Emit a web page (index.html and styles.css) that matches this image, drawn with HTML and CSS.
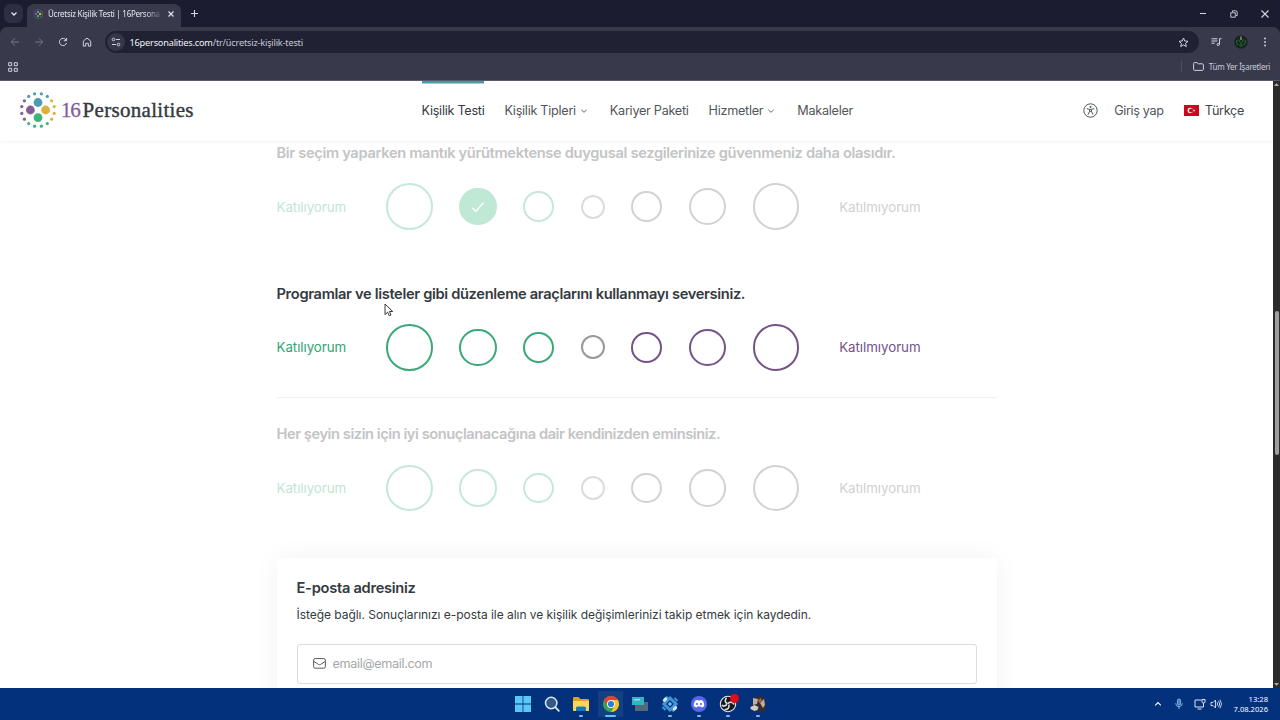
FILE: index.html
```html
<!DOCTYPE html>
<html lang="tr">
<head>
  <meta charset="UTF-8">
  <meta name="viewport" content="width=device-width, initial-scale=1.0">
  <title>Ücretsiz Kişilik Testi | 16Personalities</title>
  <link rel="stylesheet" href="styles.css">
</head>
<body>
  <svg class="defs" width="0" height="0">
    <symbol id="logo" viewBox="0 0 36 36">
      <g fill="#4a9cb0"><circle cx="18" cy="10.5" r="4.4"/><circle cx="14.6" cy="1.8" r="1.6"/><circle cx="21.4" cy="1.8" r="1.6"/><circle cx="8.7" cy="4.4" r="1.6"/><circle cx="27.3" cy="4.4" r="1.6"/></g>
      <g fill="#e0b03c"><circle cx="25.6" cy="18" r="4.4"/><circle cx="31.6" cy="8.8" r="1.6"/><circle cx="34.2" cy="14.6" r="1.6"/><circle cx="34.2" cy="21.4" r="1.6"/><circle cx="31.6" cy="27.2" r="1.6"/></g>
      <g fill="#3db37b"><circle cx="18" cy="25.6" r="4.4"/><circle cx="14.6" cy="34.2" r="1.6"/><circle cx="21.4" cy="34.2" r="1.6"/><circle cx="8.7" cy="31.6" r="1.6"/><circle cx="27.3" cy="31.6" r="1.6"/></g>
      <g fill="#835d9b"><circle cx="10.4" cy="18" r="4.4"/><circle cx="4.4" cy="8.8" r="1.6"/><circle cx="1.8" cy="14.6" r="1.6"/><circle cx="1.8" cy="21.4" r="1.6"/><circle cx="4.4" cy="27.2" r="1.6"/></g>
    </symbol>
    <symbol id="down" viewBox="0 0 8 8"><path d="M1.3 2.8 4 5.3l2.7-2.5" fill="none" stroke="currentColor" stroke-width=".9"/></symbol>
  </svg>

  <div class="tabbar">
    <span class="tab-search"><svg width="8" height="8" viewBox="0 0 8 8"><path d="M1.5 2.5 4 5l2.5-2.5" fill="none" stroke="#e4e5ed" stroke-width="1.3"/></svg></span>
    <div class="tab">
      <svg class="favicon" width="10" height="10"><use href="#logo"/></svg>
      <span class="tab-title">Ücretsiz Kişilik Testi | 16Persona</span>
      <svg width="8" height="8" viewBox="0 0 8 8"><path d="m1.5 1.5 5 5m0-5-5 5" stroke="#e4e5ed" stroke-width="1.1"/></svg>
    </div>
    <svg class="new-tab" width="9" height="9" viewBox="0 0 9 9"><path d="M4.5 1v7M1 4.5h7" stroke="#d5d6df" stroke-width="1.1"/></svg>
    <div class="window-buttons">
      <svg width="10" height="10" viewBox="0 0 10 10"><path d="M2 4.5h6" stroke="#d5d6df"/></svg>
      <svg width="10" height="10" viewBox="0 0 10 10"><path d="M1.8 3.7h4.5v4.5H1.8zM3.5 3V1.8h3.3q1.4 0 1.4 1.4v3.3H7" fill="none" stroke="#d5d6df" stroke-width=".9"/></svg>
      <svg width="10" height="10" viewBox="0 0 10 10"><path d="m1.5 1.5 7 7m0-7-7 7" stroke="#d5d6df" stroke-width="1.1"/></svg>
    </div>
  </div>

  <div class="chrome">
    <div class="toolbar">
      <div class="nav-buttons">
        <svg class="disabled" width="10" height="10" viewBox="0 0 10 10"><path d="M9 5H1.5M5 1.3 1.3 5 5 8.7"/></svg>
        <svg class="disabled" width="10" height="10" viewBox="0 0 10 10"><path d="M1 5h7.5M5 1.3 8.7 5 5 8.7"/></svg>
        <svg width="10" height="10" viewBox="0 0 10 10"><path d="M8.2 3.2A3.6 3.6 0 1 0 8.5 6M8.6.9v2.8H5.8"/></svg>
        <svg width="10" height="10" viewBox="0 0 10 10"><path d="M1.3 4.1 5 1.1l3.7 3v5H6.3V6.3H3.7v2.8H1.3z"/></svg>
      </div>
      <div class="address">
        <span class="site-info"><svg width="10" height="10" viewBox="0 0 10 10"><path d="M5 2.5h4M1 7.5h4"/><circle cx="2.5" cy="2.5" r="1.3"/><circle cx="7.5" cy="7.5" r="1.3"/></svg></span>
        <span class="url"><b>16personalities.com</b>/tr/ücretsiz-kişilik-testi</span>
        <svg width="11" height="11" viewBox="0 0 11 11"><path d="m5.5 1 1.3 3 3.2.3-2.4 2.1.7 3.2-2.8-1.7-2.8 1.7.7-3.2L1 4.3 4.2 4z"/></svg>
      </div>
      <div class="tools">
        <svg width="11" height="10" viewBox="0 0 11 10"><path d="M.5 1.8h6M.5 4h6M.5 6.2h3.2M8.5 7.5V1.7h2"/><circle cx="7.2" cy="7.5" r="1.1"/></svg>
        <svg width="14" height="14" viewBox="0 0 14 14"><circle cx="7" cy="7" r="6.7" fill="#16251b" stroke="none"/><path d="M2.8 5q-.8 3 1.4 5M11.2 5q.8 3-1.4 5M4.5 4.5 6 7M9.5 4.5 8 7M5 9.5l2 2 2-2M7 7v3" stroke="#29703b"/><path d="M7 1.5V5" stroke="#b4c8bb"/></svg>
        <svg width="4" height="10" viewBox="0 0 4 10"><g fill="#d5d6df" stroke="none"><circle cx="2" cy="1.5" r=".9"/><circle cx="2" cy="5" r=".9"/><circle cx="2" cy="8.5" r=".9"/></g></svg>
      </div>
    </div>

    <div class="bookmarks">
      <svg width="10" height="10" viewBox="0 0 10 10"><path d="M.7.7h3v3h-3zM6.3.7h3v3h-3zM.7 6.3h3v3h-3zM6.3 6.3h3v3h-3z"/></svg>
      <div class="all-bookmarks">
        <svg width="11" height="9" viewBox="0 0 11 9"><path d="M.6 7.4V1.6q0-1 1-1h2.3l1.3 1.2h4.2q1 0 1 1v4.6q0 1-1 1H1.6q-1 0-1-1z"/></svg>
        <span>Tüm Yer İşaretleri</span>
      </div>
    </div>
  </div>

  <div class="viewport">
    <div class="page">
      <header class="site-header">
        <a class="brand">
          <svg width="36" height="36"><use href="#logo"/></svg>
          <span class="brand-number">16</span><span class="brand-name">Personalities</span>
        </a>
        <nav class="menu">
          <a class="active">Kişilik Testi</a>
          <a>Kişilik Tipleri <svg width="8" height="8"><use href="#down"/></svg></a>
          <a>Kariyer Paketi</a>
          <a>Hizmetler <svg width="8" height="8"><use href="#down"/></svg></a>
          <a>Makaleler</a>
        </nav>
        <div class="account">
          <svg width="15" height="15" viewBox="0 0 15 15"><circle cx="7.5" cy="7.5" r="6.7" fill="none" stroke="#51565b"/><circle cx="7.5" cy="3.9" r="1" fill="#51565b"/><path d="m3.8 5.6 2.7.8v2l-1.3 3.2M11.2 5.6l-2.7.8v2l1.3 3.2M6.5 6.4h2M6.5 8.4h2" fill="none" stroke="#51565b"/></svg>
          <a class="login">Giriş yap</a>
          <svg width="15" height="11" viewBox="0 0 15 11"><path d="M0 0h15v11H0z" fill="#d00620"/><circle cx="6.3" cy="5.5" r="2.7" fill="#fff"/><circle cx="7.1" cy="5.5" r="2.1" fill="#d00620"/><path d="m8.6 5.5 1-.3.1-1 .6.8 1-.3-.6.8.6.8-1-.3-.6.8-.1-1z" fill="#fff"/></svg>
          <a class="language">Türkçe</a>
        </div>
      </header>

      <main class="test">
        <section class="question faded">
          <h2>Bir seçim yaparken mantık yürütmektense duygusal sezgilerinize güvenmeniz daha olasıdır.</h2>
          <div class="scale">
            <span class="agree">Katılıyorum</span>
            <div class="options">
              <i class="xl green"></i>
              <i class="lg green checked"><svg width="16" height="16" viewBox="0 0 16 16"><path d="m2.3 8.8 3.4 3.7 7.8-9" fill="none" stroke="#fff" stroke-width="1.3"/></svg></i>
              <i class="md green"></i><i class="sm"></i><i class="md purple"></i><i class="lg purple"></i><i class="xl purple"></i>
            </div>
            <span class="disagree">Katılmıyorum</span>
          </div>
        </section>

        <section class="question current">
          <h2>Programlar ve listeler gibi düzenleme araçlarını kullanmayı seversiniz.</h2>
          <div class="scale">
            <span class="agree">Katılıyorum</span>
            <div class="options">
              <i class="xl green"></i><i class="lg green"></i><i class="md green"></i><i class="sm"></i><i class="md purple"></i><i class="lg purple"></i><i class="xl purple"></i>
            </div>
            <span class="disagree">Katılmıyorum</span>
          </div>
        </section>

        <section class="question faded">
          <h2 class="tight">Her şeyin sizin için iyi sonuçlanacağına dair kendinizden eminsiniz.</h2>
          <div class="scale">
            <span class="agree">Katılıyorum</span>
            <div class="options">
              <i class="xl green"></i><i class="lg green"></i><i class="md green"></i><i class="sm"></i><i class="md purple"></i><i class="lg purple"></i><i class="xl purple"></i>
            </div>
            <span class="disagree">Katılmıyorum</span>
          </div>
        </section>

        <section class="email-card">
          <h3>E-posta adresiniz</h3>
          <p>İsteğe bağlı. Sonuçlarınızı e-posta ile alın ve kişilik değişimlerinizi takip etmek için kaydedin.</p>
          <div class="email-field">
            <svg width="13" height="11" viewBox="0 0 13 11"><rect x=".6" y=".6" width="11.8" height="9.6" rx="1.6" fill="none" stroke="#555a5f"/><path d="m.8 3.4 4.6 3q1.1.7 2.2 0l4.6-3" fill="none" stroke="#555a5f"/></svg>
            <span>email@email.com</span>
          </div>
        </section>
      </main>
    </div>
    <div class="scrollbar">
      <svg width="7" height="7" viewBox="0 0 7 7"><path d="m1 5 2.5-3L6 5z" fill="#aaa"/></svg>
      <div class="thumb"></div>
      <svg width="7" height="7" viewBox="0 0 7 7"><path d="m1 2 2.5 3L6 2z" fill="#aaa"/></svg>
    </div>
  </div>

  <footer class="taskbar">
    <div class="apps">
      <span class="app"><svg width="18" height="18" viewBox="0 0 18 18"><path d="M1 1h7.6v7.6H1zM9.4 1H17v7.6H9.4zM1 9.4h7.6V17H1zM9.4 9.4H17V17H9.4z" fill="#58c8f5"/></svg></span>
      <span class="app"><svg width="18" height="18" viewBox="0 0 18 18"><circle cx="8.2" cy="8" r="5.7" fill="#315a86" stroke="#dce6ef" stroke-width="1.5"/><path d="m12.3 12.2 3.5 3.7" stroke="#dce6ef" stroke-width="1.8" stroke-linecap="round"/></svg></span>
      <span class="app open"><svg width="18" height="18" viewBox="0 0 18 18"><path d="M1 3q0-1 1-1h4.5l2 2H16q1 0 1 1v10q0 1-1 1H2q-1 0-1-1z" fill="#d9a321"/><path d="M1 6h16v9q0 1-1 1H2q-1 0-1-1z" fill="#fbd65b"/><path d="M4 16v-3q0-1.5 1.5-1.5h7q1.5 0 1.5 1.5v3z" fill="#1878b8"/></svg></span>
      <span class="app selected"><svg width="18" height="18" viewBox="0 0 18 18"><circle cx="9" cy="9" r="8" fill="#32a852"/><path d="M2.1 5A8 8 0 0 1 15.9 5H9L5.6 11z" fill="#e34235"/><path d="M15.9 5A8 8 0 0 1 9 17l3.5-6L13 7.5 9 5z" fill="#fbc11e"/><circle cx="9" cy="9" r="4" fill="#fff"/><circle cx="9" cy="9" r="3.1" fill="#3179dc"/></svg></span>
      <span class="app"><svg width="18" height="18" viewBox="0 0 18 18"><path d="M4 7h13v9H4z" fill="#526b7b"/><path d="M1 2h12v8H1z" fill="#36b1c6"/><path d="M3 4h6v1.5H3z" fill="#8de4e8"/></svg></span>
      <span class="app open"><svg width="18" height="18" viewBox="0 0 18 18"><path d="m9 3 6 6-6 6-6-6z" fill="none" stroke="#3f97d6" stroke-width="3"/><path d="m9 6.8 2.2 2.2L9 11.2 6.8 9z" fill="#6bc0ee"/><path d="m5 1.5 3 3M10 13.5l3 3M1.5 12l3 3M13.5 3l3 3" stroke="#3f97d6" stroke-width="2"/><ellipse cx="4" cy="4.6" rx="2.6" ry="1.7" transform="rotate(-45 4 4.6)" fill="#d7e6ed"/><ellipse cx="14" cy="13.4" rx="2.6" ry="1.7" transform="rotate(-45 14 13.4)" fill="#d7e6ed"/></svg></span>
      <span class="app open"><svg width="18" height="18" viewBox="0 0 18 18"><circle cx="9" cy="9" r="8" fill="#5865e8"/><path d="M5 5.8q1.4-.8 2.8-.9l.4.7h1.6l.4-.7q1.4.1 2.8.9 1.4 2.8 1.2 5.5-1.3 1-2.7 1.2l-.7-1H7.2l-.7 1q-1.4-.2-2.7-1.2Q3.6 8.6 5 5.8z" fill="#fff"/><circle cx="7" cy="9" r="1.1" fill="#5865e8"/><circle cx="11" cy="9" r="1.1" fill="#5865e8"/></svg></span>
      <span class="app open recording"><svg width="18" height="18" viewBox="0 0 18 18"><circle cx="9" cy="9" r="7.7" fill="#18191d" stroke="#e5e6eb" stroke-width="1.1"/><path d="M7.5 2.8q-2.8 3.5.8 6M15 9.5q-2-4.2-6.3-1M5.5 14.5q5 .5 4.5-4.8M3 10q2 2.5 5-.7" fill="none" stroke="#dfe0e4" stroke-width="1.6"/></svg></span>
      <span class="app open"><svg width="18" height="18" viewBox="0 0 18 18"><path d="M4 2.5 12 1l4 3 1 8-2 4-6 1-8-3 3-6z" fill="#342e2d"/><path d="m4 3 5 1-1 5-4 1zM11 8l4-4 1 6-2 3z" fill="#b9afa5"/><path d="m1.5 12 4-2 4 2-1 3-3 1-4-2z" fill="#d0cbc4"/><path d="m9 5 3-2 1 3-3 2z" fill="#a7643e"/></svg></span>
    </div>
    <div class="tray">
      <svg width="8" height="8" viewBox="0 0 8 8"><path d="M1.2 5.3 4 2.6l2.8 2.7" fill="none" stroke="#fff" stroke-width="1.1"/></svg>
      <svg width="10" height="12" viewBox="0 0 10 12"><rect x="3.4" y="1" width="3.2" height="6" rx="1.6" fill="#4c80bb" stroke="#8bc3f0" stroke-width=".8"/><path d="M1.7 5.2q0 3.5 3.3 3.5t3.3-3.5M5 8.7V11" fill="none" stroke="#8bc3f0" stroke-width=".9"/></svg>
      <svg width="12" height="12" viewBox="0 0 12 12"><path d="M7.5 2H1v7h8.5V6.8M3.5 11h4M9.5 5v2M8 1.5h3V4q0 1-1.5 1T8 4z" fill="none" stroke="#dce5f2"/></svg>
      <svg width="12" height="12" viewBox="0 0 12 12"><path d="M1 4.5h2L5.5 2v8L3 7.5H1zM7 4.2q1.3 1.8 0 3.6M8.5 2.8q2.4 3.2 0 6.4M10 1.7q3 4.3 0 8.6" fill="none" stroke="#dce5f2" stroke-width=".9"/></svg>
      <div class="clock"><span>13:28</span><span>7.08.2026</span></div>
    </div>
  </footer>

  <svg class="cursor" width="10" height="15" viewBox="0 0 10 15"><path d="M1 1v10.6l2.6-2.4 1.7 3.6 1.7-.8-1.6-3.5h3.3z" fill="#fff" stroke="#222" stroke-width=".9"/></svg>
</body>
</html>
```
FILE: styles.css
```css
* {
  box-sizing: border-box;
}
body {
  margin: 0;
  width: 1280px;
  height: 720px;
  overflow: hidden;
  display: flex;
  flex-direction: column;
  font-family: Inter, sans-serif;
  background: #1b1c2f;
  color: #343a40;
}
svg {
  display: block;
  flex: none;
}
.defs {
  position: absolute;
}

/* browser */
.tabbar {
  height: 27px;
  flex: none;
  display: flex;
  align-items: center;
  padding-left: 4px;
  background: #1b1c2f;
  font-family: "Noto Sans", sans-serif;
}
.tab-search {
  width: 19px;
  height: 19px;
  border-radius: 6px;
  background: #2c2e41;
  display: flex;
  align-items: center;
  justify-content: center;
}
.tab {
  width: 154px;
  height: 23px;
  margin: 4px 0 0 4px;
  padding: 0 6px 4px;
  border-radius: 7px 7px 0 0;
  background: #383a4c;
  display: flex;
  align-items: center;
}
.tab-title {
  width: 112px;
  margin: 0 7px 0 5px;
  white-space: nowrap;
  font-size: 8px;
  letter-spacing: -0.27px;
  color: #e4e5ed;
  -webkit-mask-image: linear-gradient(90deg, #000 86%, rgba(0, 0, 0, 0.2));
  mask-image: linear-gradient(90deg, #000 86%, rgba(0, 0, 0, 0.2));
}
.new-tab {
  margin-left: 9px;
}
.window-buttons {
  display: flex;
  gap: 21px;
  margin-left: auto;
  padding-right: 10px;
}
.chrome {
  flex: none;
  border-radius: 7px 7px 0 0;
  background: #383a4c;
  font-family: "Noto Sans", sans-serif;
  color: #dedfe9;
}
.toolbar, .bookmarks {
  display: flex;
  align-items: center;
}
.toolbar {
  height: 30px;
  padding-left: 10px;
}
.toolbar svg, .bookmarks svg {
  fill: none;
  stroke: #d0d2de;
  stroke-width: 1;
}
.toolbar .nav-buttons .disabled {
  stroke: #747687;
}
.nav-buttons {
  display: flex;
  gap: 14px;
}
.address {
  width: 1094px;
  height: 22px;
  margin-left: 13px;
  padding: 0 10px 0 2px;
  border-radius: 11px;
  background: #202233;
  display: flex;
  align-items: center;
}
.site-info {
  width: 18px;
  height: 18px;
  border-radius: 50%;
  background: #35374a;
  display: flex;
  align-items: center;
  justify-content: center;
}
.url {
  flex: 1;
  margin-left: 4.5px;
  font-size: 9.2px;
  letter-spacing: -0.2px;
  color: #c6c8d6;
}
.url b {
  font-weight: 400;
  color: #f1f1f6;
}
.tools {
  display: flex;
  align-items: center;
  gap: 12px;
  margin-left: 12px;
}
.tools svg:last-child {
  margin-left: 3px;
}
.bookmarks {
  height: 24px;
  padding: 0 10px 4px 8px;
  border-bottom: 1px solid #5a5b66;
}
.all-bookmarks {
  display: flex;
  align-items: center;
  gap: 5px;
  margin-left: auto;
  padding-left: 11px;
  border-left: 1px solid #505266;
  white-space: nowrap;
  font-size: 8px;
  letter-spacing: -0.27px;
  line-height: 11px;
  color: #c9cbd9;
}

/* site */
.viewport {
  height: 607px;
  flex: none;
  display: flex;
}
.page {
  width: 1273px;
  overflow: hidden;
  background: #fff;
}
.site-header {
  position: relative;
  z-index: 1;
  height: 60px;
  padding: 0 29px 0 20px;
  display: flex;
  align-items: center;
  background: #fff;
  box-shadow: 0 1px 3px rgba(0, 0, 0, 0.06);
  font-size: 12.67px;
  letter-spacing: -0.28px;
  color: #51565b;
}
.brand {
  width: 401.5px;
  padding-bottom: 2px;
  display: flex;
  align-items: center;
  font-family: "Liberation Serif", serif;
  font-size: 21px;
  letter-spacing: 0.3px;
}
.brand-number {
  margin-left: 5px;
  color: #835d9b;
  -webkit-text-stroke: 0.3px #835d9b;
  letter-spacing: -1.2px;
}
.brand-name {
  margin-left: 3px;
  color: #343a40;
  -webkit-text-stroke: 0.4px #343a40;
}
.menu {
  display: flex;
  gap: 20px;
}
.menu a {
  height: 60px;
  padding-bottom: 1px;
  display: flex;
  align-items: center;
  gap: 4px;
  white-space: nowrap;
}
.menu a svg {
  margin-right: 2px;
}
.menu .active {
  color: #343a40;
  box-shadow: inset 0 2.5px 0 #4c9aa6;
}
.account {
  padding-bottom: 1px;
  display: flex;
  align-items: center;
  margin-left: auto;
}
.login {
  margin: 0 20px 0 16.5px;
  letter-spacing: -0.35px;
}
.language {
  margin-left: 6px;
  letter-spacing: -0.32px;
  color: #40464b;
}
.test {
  width: 720px;
  margin: -24px auto 0;
}
.question {
  height: 140.67px;
  padding-top: 26px;
}
.question h2 {
  margin: 0;
  line-height: 20px;
  font-size: 14.67px;
  font-weight: 600;
  letter-spacing: -0.33px;
  white-space: nowrap;
}
.question h2.tight {
  letter-spacing: -0.44px;
}
.question.current {
  border-bottom: 1px solid #f1f1f1;
}
.scale {
  height: 47px;
  margin-top: 20.2px;
  display: flex;
  align-items: center;
  font-size: 13.33px;
  letter-spacing: -0.05px;
}
.agree {
  width: 109.5px;
  color: #33a474;
}
.disagree {
  margin-left: 40px;
  color: #745389;
}
.options {
  display: flex;
  align-items: center;
  gap: 26.67px;
}
.options i {
  border: 2px solid #999;
  border-radius: 50%;
  display: flex;
  align-items: center;
  justify-content: center;
}
.options .sm {
  width: 24px;
  height: 24px;
}
.options .md {
  width: 30.67px;
  height: 30.67px;
}
.options .lg {
  width: 37.33px;
  height: 37.33px;
}
.options .xl {
  width: 46.67px;
  height: 46.67px;
}
.options .green {
  border-color: #3ba878;
}
.options .purple {
  border-color: #745389;
}
.faded h2 {
  color: #c3c4c5;
}
.faded .agree {
  color: #bfe6d5;
}
.faded .disagree {
  color: #d0d0d2;
}
.faded .options i {
  border-color: #dcdcdc;
}
.faded .options .green {
  border-color: #c5e8da;
}
.faded .options .purple {
  border-color: #d2d1d4;
}
.faded .options .checked {
  border-color: #bfe8d5;
  background: #bfe8d5;
}
.email-card {
  height: 180px;
  margin-top: 19px;
  padding: 20px;
  border-radius: 4px;
  background: #fff;
  box-shadow: 0 0 26px rgba(0, 0, 0, 0.055);
}
.email-card h3 {
  margin: 0;
  line-height: 20px;
  font-size: 14.67px;
  font-weight: 600;
  letter-spacing: -0.28px;
}
.email-card p {
  margin: 7px 0 20px;
  line-height: 19px;
  font-size: 12px;
  letter-spacing: -0.04px;
  white-space: nowrap;
}
.email-field {
  height: 40px;
  padding-left: 15px;
  display: flex;
  align-items: center;
  gap: 7px;
  border: 1px solid #d9dbdc;
  border-radius: 3px;
  font-size: 12.67px;
  letter-spacing: -0.36px;
  color: #a5a8aa;
}
.scrollbar {
  width: 7px;
  display: flex;
  flex-direction: column;
  align-items: center;
  justify-content: space-between;
  background: #2b2b2b;
}
.thumb {
  width: 4px;
  height: 144px;
  margin-top: -3px;
  border-radius: 2px;
  background: #9f9f9f;
}

/* taskbar */
.taskbar {
  height: 32px;
  flex: none;
  display: flex;
  align-items: center;
  padding: 0 12px 0 508px;
  background: #03317b;
}
.apps {
  display: flex;
}
.app {
  position: relative;
  width: 29.4px;
  height: 32px;
  display: flex;
  align-items: center;
  justify-content: center;
}
.app.open::after, .app.selected::after {
  content: "";
  position: absolute;
  bottom: 3px;
  width: 4px;
  height: 2px;
  border-radius: 1px;
  background: #8fb4dc;
}
.app.selected {
  background: linear-gradient(#143f83, #143f83) center / 25px 26px no-repeat;
}
.app.selected::after {
  width: 11px;
  background: #60c4f5;
}
.recording::before {
  content: "";
  position: absolute;
  top: 6px;
  right: 4px;
  width: 9px;
  height: 9px;
  border-radius: 50%;
  background: #e00b18;
}
.tray {
  display: flex;
  align-items: center;
  margin-left: auto;
}
.tray svg:nth-child(1) {
  margin-right: 12px;
}
.tray svg:nth-child(2) {
  margin-right: 10px;
}
.tray svg:nth-child(3) {
  margin-right: 4px;
}
.clock {
  width: 46px;
  display: flex;
  flex-direction: column;
  align-items: flex-end;
  font-family: "Noto Sans", sans-serif;
  font-size: 7.6px;
  line-height: 10.5px;
  color: #fff;
}
.cursor {
  position: absolute;
  left: 384px;
  top: 303px;
}
```
